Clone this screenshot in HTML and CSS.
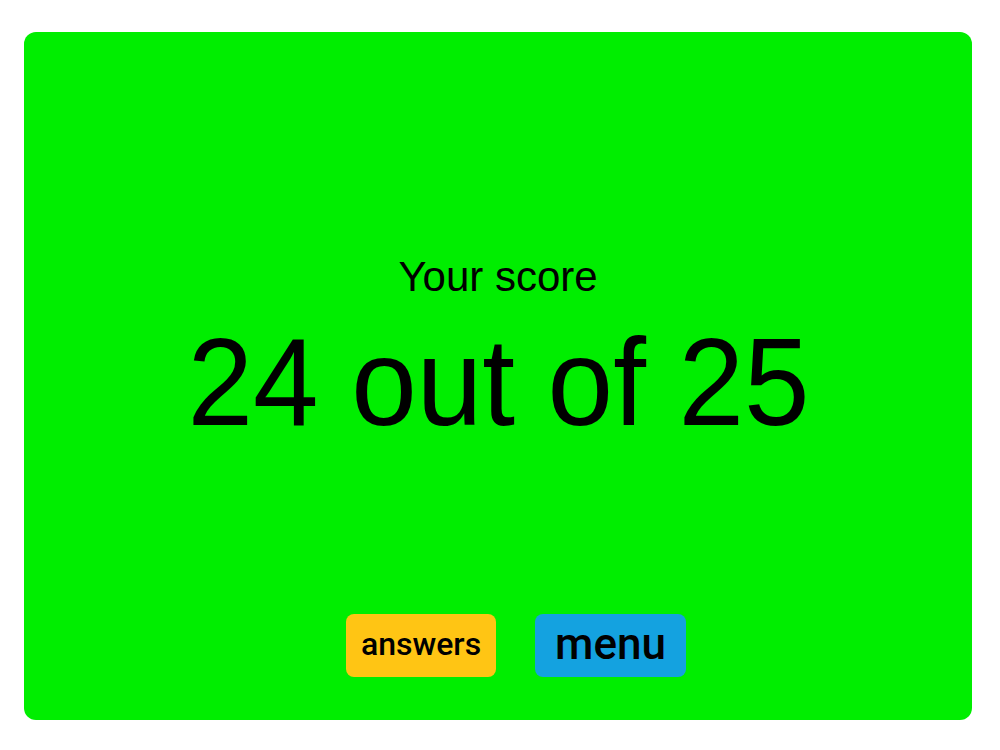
FILE: index.html
```html
<!DOCTYPE html>
<html>
<head>
<meta charset="utf-8">
<link rel="stylesheet" href="styles.css">
</head>
<body>
<div class="panel">
  <div class="label">Your score</div>
  <div class="score">24 out of 25</div>
  <div class="buttons">
    <div class="btn btn-answers">answers</div>
    <div class="btn btn-menu">menu</div>
  </div>
</div>
</body>
</html>
```
FILE: styles.css
```css
html, body {
  margin: 0;
  padding: 0;
  background: #ffffff;
}
body {
  padding: 32px 28px 30px 24px;
  font-family: "Liberation Sans", Arial, sans-serif;
}
.panel {
  box-sizing: border-box;
  width: 948px;
  height: 688px;
  background: #00ee00;
  border-radius: 12px;
  display: flex;
  flex-direction: column;
  align-items: center;
  padding: 224px 0 43px 0;
  color: #000;
}
.label {
  font-size: 42px;
  line-height: 1;
}
.score {
  font-size: 124px;
  line-height: 1;
  margin-top: 22px;
  transform: scaleX(0.95);
}
.buttons {
  margin-top: auto;
  display: flex;
  gap: 39px;
  padding-left: 36px;
}
.btn {
  box-sizing: border-box;
  width: 150px;
  height: 63px;
  border-radius: 8px;
  display: flex;
  align-items: center;
  justify-content: center;
  font-family: Roboto, "Open Sans", sans-serif;
  font-weight: 500;
  color: #000;
}
.btn-answers {
  background: #ffc514;
  font-size: 32px;
  padding-bottom: 3px;
}
.btn-menu {
  width: 151px;
  background: #14a2e0;
  font-size: 44px;
  padding-bottom: 4px;
}
```
